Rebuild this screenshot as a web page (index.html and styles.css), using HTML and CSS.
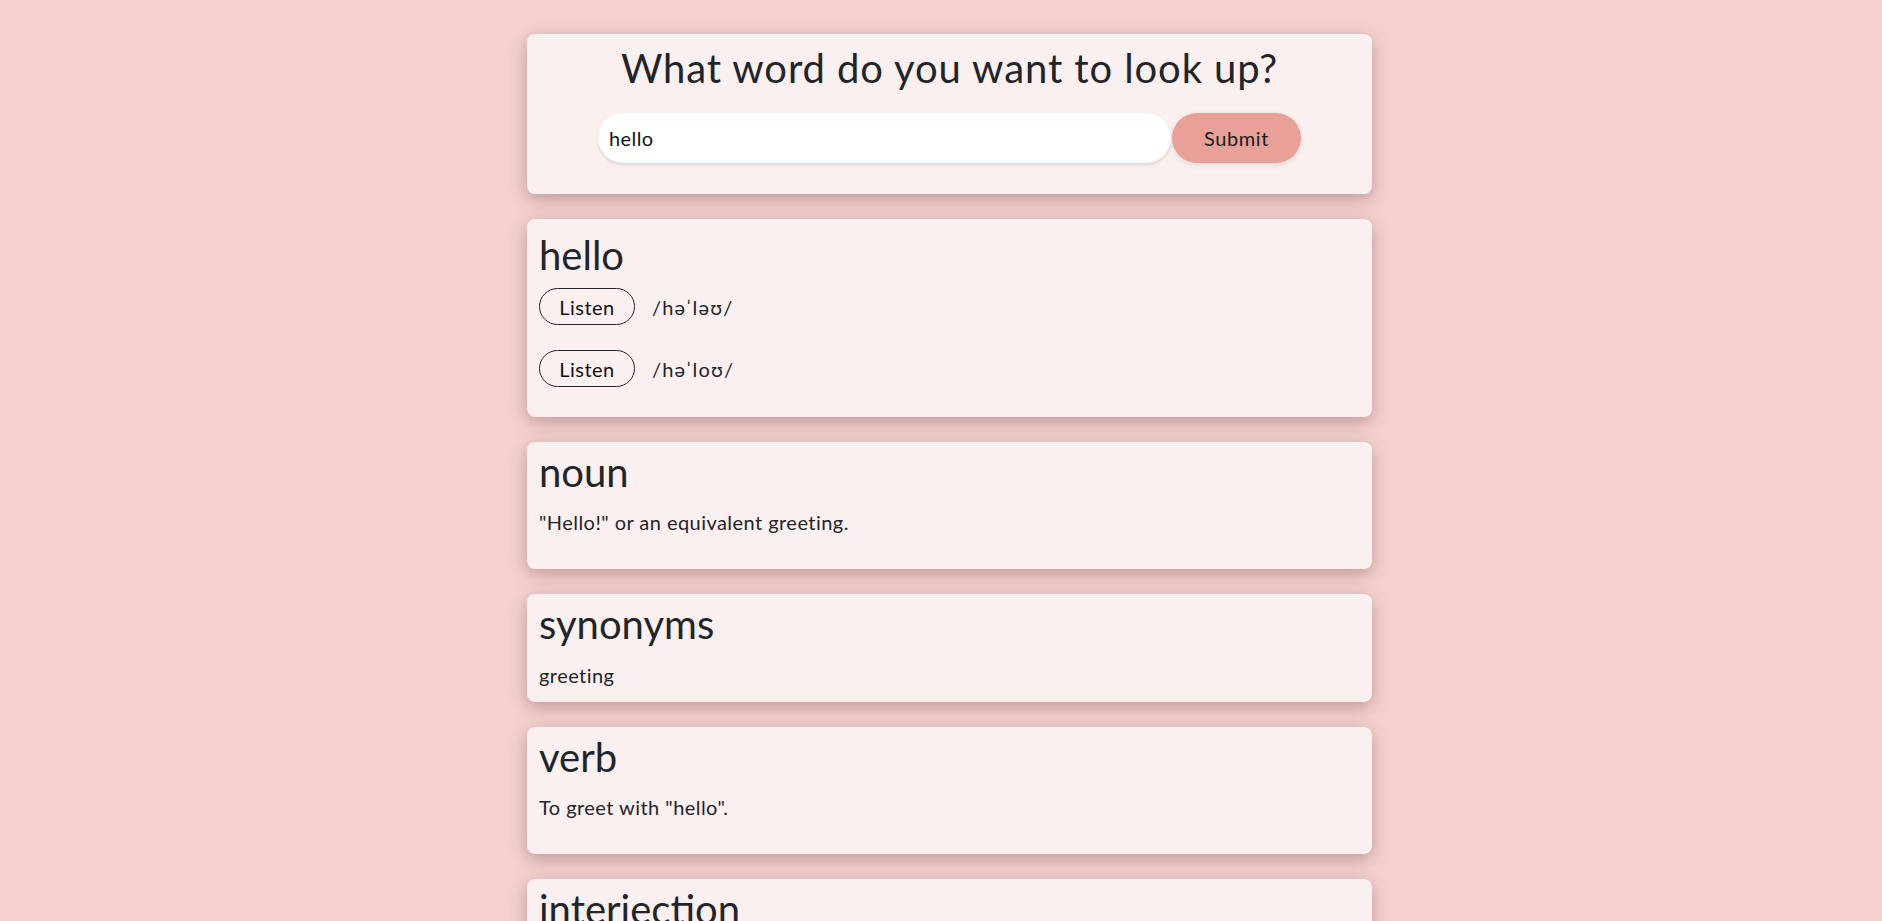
FILE: index.html
```html
<!DOCTYPE html>
<html lang="en">
<head>
<meta charset="utf-8">
<title>Dictionary</title>
<link rel="stylesheet" href="styles.css">
</head>
<body>
<main class="page">
  <section class="card search-card">
    <h1 class="search-title">What word do you want to look up?</h1>
    <form class="search-form">
      <input class="search-input" type="search" value="hello">
      <button class="search-submit" type="button">Submit</button>
    </form>
  </section>

  <section class="card word-card">
    <h2 class="word-title">hello</h2>
    <div class="phonetic-row">
      <button class="listen-btn" type="button">Listen</button>
      <span class="phonetic-text">/həˈləʊ/</span>
    </div>
    <div class="phonetic-row">
      <button class="listen-btn" type="button">Listen</button>
      <span class="phonetic-text">/həˈloʊ/</span>
    </div>
  </section>

  <section class="card def-card">
    <h2 class="card-heading">noun</h2>
    <p class="definition">"Hello!" or an equivalent greeting.</p>
  </section>

  <section class="card">
    <h2 class="card-heading">synonyms</h2>
    <p class="synonyms">greeting</p>
  </section>

  <section class="card def-card">
    <h2 class="card-heading">verb</h2>
    <p class="definition">To greet with "hello".</p>
  </section>

  <section class="card def-card">
    <h2 class="card-heading">interjection</h2>
    <p class="definition">A greeting (salutation) said when meeting someone or acknowledging someone’s arrival or presence.</p>
  </section>
</main>
</body>
</html>
```

FILE: styles.css
```css
* {
  box-sizing: border-box;
}

body {
  margin: 0;
  padding: 34px 0 40px 17px;
  background: #f4d1d0;
  color: #212529;
  font-family: Lato, "Noto Sans", sans-serif;
}

.page {
  width: 845px;
  margin: 0 auto;
  display: flex;
  flex-direction: column;
  gap: 25px;
}

.card {
  background: #fbf0f0;
  border-radius: 8px;
  box-shadow: 0 5px 18px rgba(70, 20, 20, 0.3);
  padding: 6px 12px 12px;
}

.def-card {
  padding-bottom: 13px;
}

.search-card {
  padding: 10px 12px 31px;
  text-align: center;
}

.search-title {
  margin: 0;
  font-size: 40px;
  line-height: 48px;
  font-weight: 400;
  letter-spacing: 0.9px;
}

.search-form {
  margin-top: 21px;
  display: flex;
  justify-content: center;
}

.search-input {
  width: 573px;
  height: 50px;
  border: none;
  border-radius: 25px;
  background: #fff;
  padding: 0 11px;
  font-family: inherit;
  font-size: 20px;
  letter-spacing: 0.4px;
  color: #111;
  box-shadow: 0 2px 3px rgba(0, 0, 0, 0.12);
  outline: none;
}

.search-submit {
  width: 129px;
  height: 50px;
  margin-left: 1px;
  border: none;
  border-radius: 25px;
  background: #e8a098;
  color: #1a1a1a;
  font-family: inherit;
  font-size: 20px;
  letter-spacing: 0.6px;
  box-shadow: 0 2px 6px rgba(0, 0, 0, 0.1);
  cursor: pointer;
}

.word-card {
  padding: 12px 12px 14px;
}

.word-title,
.card-heading {
  margin: 0;
  font-size: 40px;
  line-height: 48px;
  font-weight: 400;
}

.phonetic-row {
  display: flex;
  align-items: center;
  gap: 17px;
  margin-top: 9px;
  margin-bottom: 16px;
}

.phonetic-row + .phonetic-row {
  margin-top: 25px;
}

.listen-btn {
  width: 96px;
  height: 37px;
  border: 1px solid #212529;
  border-radius: 19px;
  background: transparent;
  color: #111;
  font-family: inherit;
  font-size: 20px;
  letter-spacing: 0.5px;
  padding: 0;
}

.phonetic-text {
  font-size: 20px;
  letter-spacing: 1.2px;
}

.definition {
  margin: 15px 0 23px;
  font-size: 20px;
  line-height: 22px;
  letter-spacing: 0.45px;
}

.synonyms {
  margin: 16px 0 4px;
  font-size: 20px;
  line-height: 22px;
  letter-spacing: 0.45px;
}
```
